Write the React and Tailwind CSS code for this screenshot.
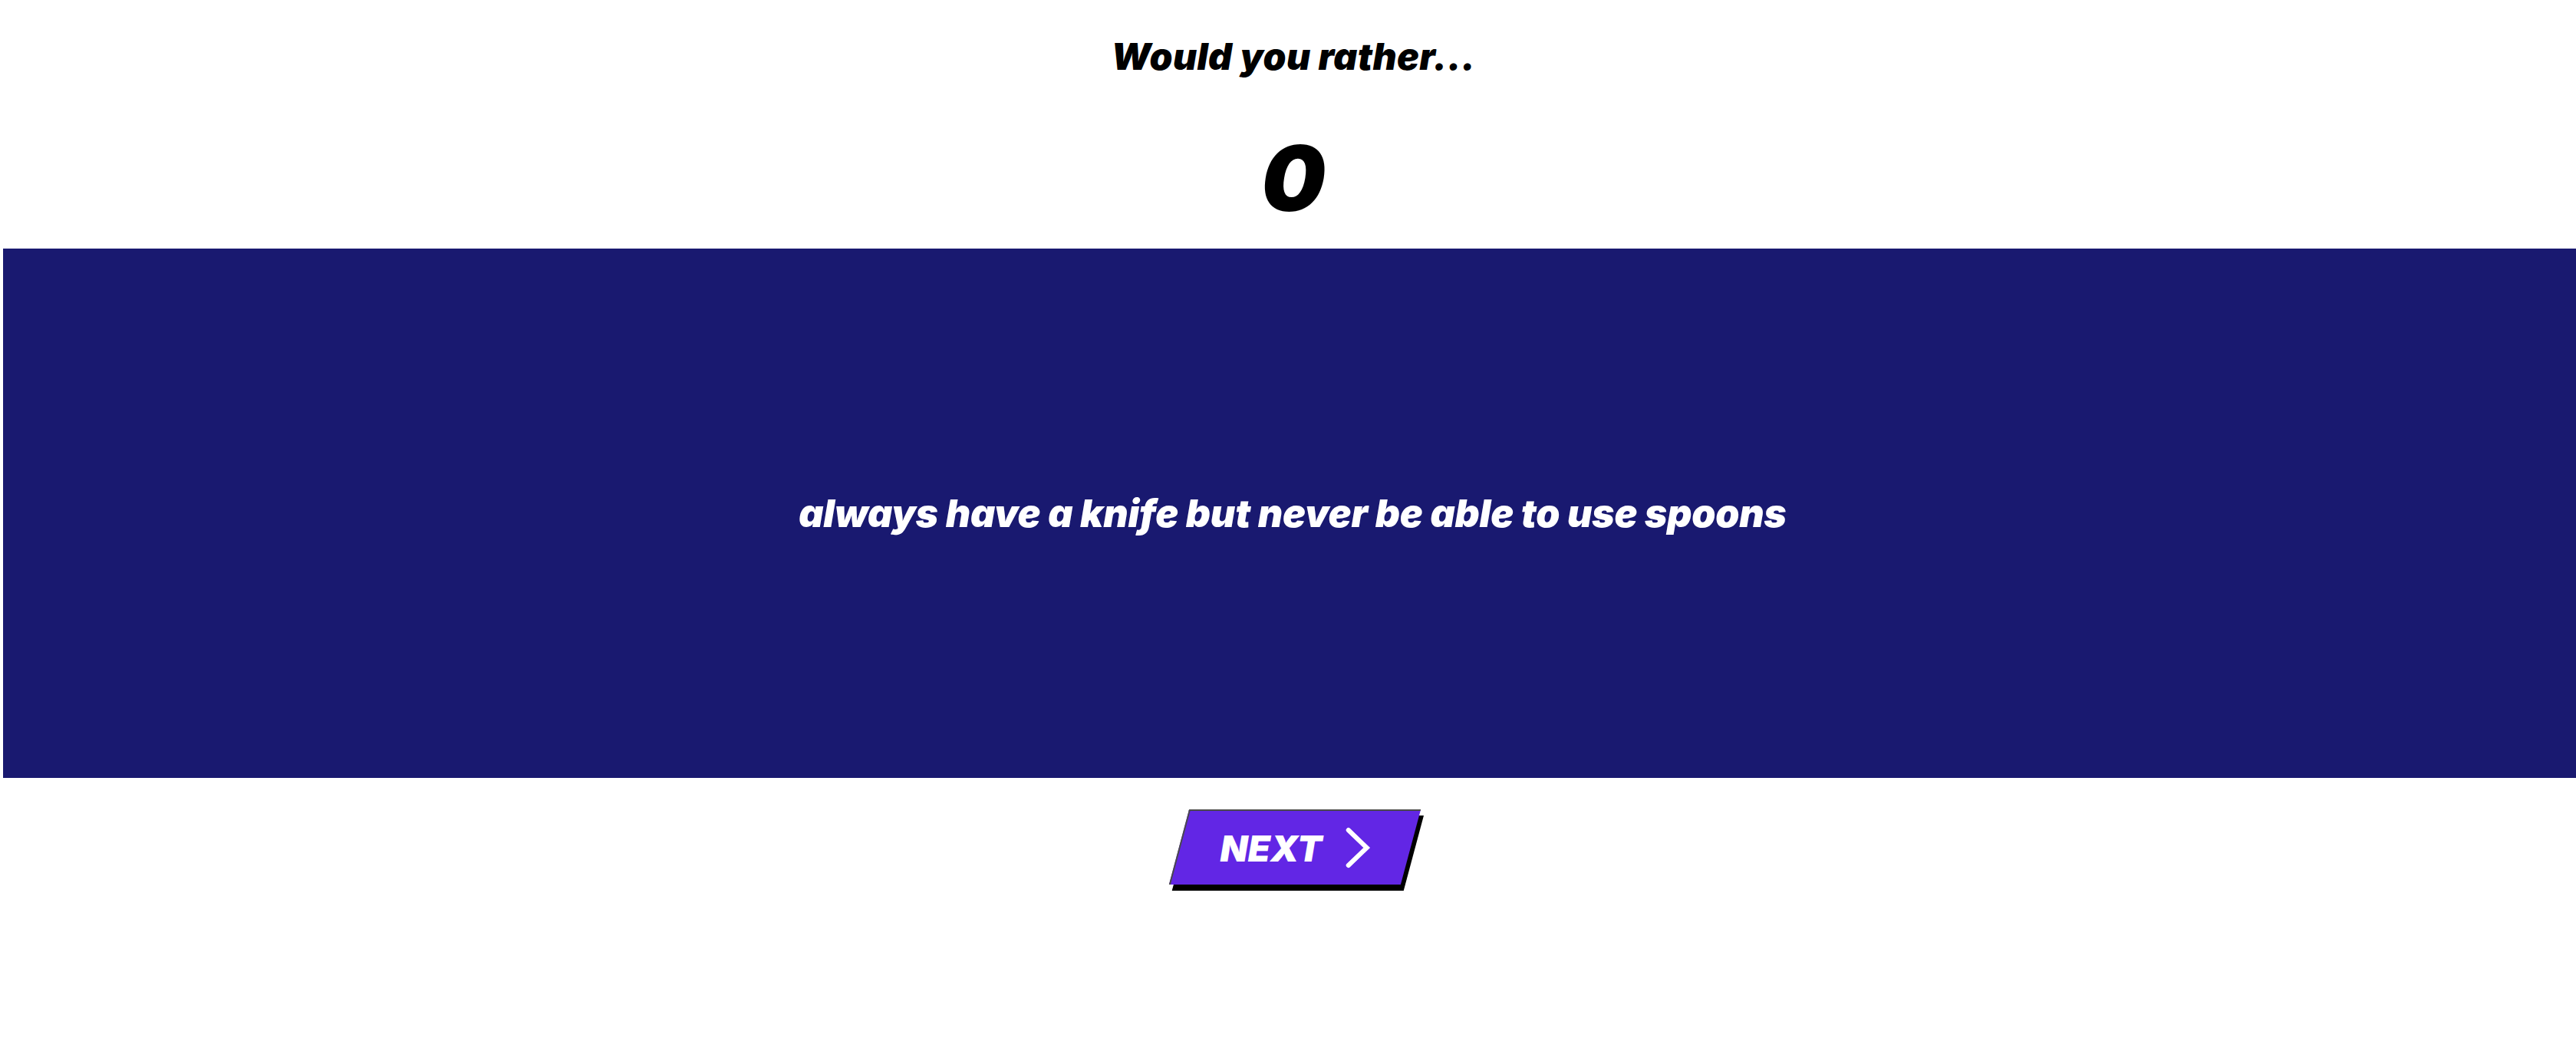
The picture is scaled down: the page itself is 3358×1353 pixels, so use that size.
import React, { useState } from 'react';

const questions = [
  'always have a knife but never be able to use spoons',
  'never be able to use forks but always have a spoon',
];

const App = () => {
  const [count, setCount] = useState(0);

  const handleNext = () => {
    setCount((c) => c + 1);
  };

  return (
    <div className="min-h-screen bg-white font-['Inter','Liberation_Sans',sans-serif] text-black">
      <h1 className="pt-[50px] pl-[14px] text-center text-[48px] font-black italic leading-none tracking-[0.4px]">
        Would you rather...
      </h1>

      <div className="mt-[75px] pl-[14px] text-center text-[118px] font-black italic leading-none">{count}</div>

      {/* -- question band */}
      <div className="mt-[33px] ml-[4px] flex h-[690px] items-center justify-center bg-[#191970] pl-[8px]">
        <p className="text-[50px] font-black italic leading-none tracking-[-0.2px] text-white">
          {questions[count % questions.length]}
        </p>
      </div>

      <div className="mt-[41px] flex justify-center pl-[18px]">
        <button
          onClick={handleNext}
          className="flex h-[98px] w-[302px] -skew-x-[15deg] items-center justify-center gap-[30px] border-l-2 border-t-2 border-[#4a4a4a] bg-[#6226e5] shadow-[6px_8px_0_#000]"
        >
          <span className="skew-x-[15deg] text-[47px] font-black italic leading-none tracking-[0px] text-white">NEXT</span>
          <svg className="skew-x-[15deg]" width="34" height="54" viewBox="0 0 34 54" fill="none">
            <path d="M5 4 L29 27 L5 50" stroke="#fff" strokeWidth="6" strokeLinecap="round" strokeLinejoin="miter" />
          </svg>
        </button>
      </div>
    </div>
  );
};

export default App;
